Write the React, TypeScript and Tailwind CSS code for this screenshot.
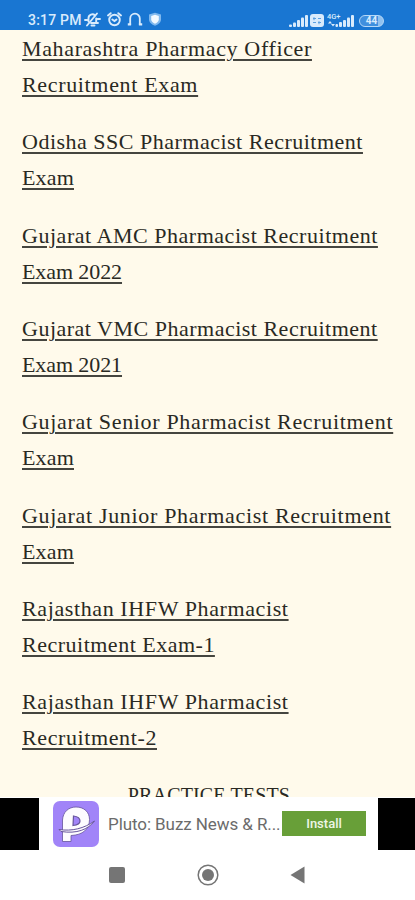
const exams = [
  [
    { text: 'Maharashtra Pharmacy Officer', tracking: 'tracking-[0.64px]' },
    { text: 'Recruitment Exam', tracking: 'tracking-[0.66px]' },
  ],
  [
    { text: 'Odisha SSC Pharmacist Recruitment', tracking: 'tracking-[0.5px]' },
    { text: 'Exam', tracking: 'tracking-[0.17px]' },
  ],
  [
    { text: 'Gujarat AMC Pharmacist Recruitment', tracking: 'tracking-[0.53px]' },
    { text: 'Exam 2022', tracking: 'tracking-[-0.09px]' },
  ],
  [
    { text: 'Gujarat VMC Pharmacist Recruitment', tracking: 'tracking-[0.5px]' },
    { text: 'Exam 2021', tracking: 'tracking-[-0.09px]' },
  ],
  [
    { text: 'Gujarat Senior Pharmacist Recruitment', tracking: 'tracking-[0.67px]' },
    { text: 'Exam', tracking: 'tracking-[0.17px]' },
  ],
  [
    { text: 'Gujarat Junior Pharmacist Recruitment', tracking: 'tracking-[0.68px]' },
    { text: 'Exam', tracking: 'tracking-[0.17px]' },
  ],
  [
    { text: 'Rajasthan IHFW Pharmacist', tracking: 'tracking-[0.61px]' },
    { text: 'Recruitment Exam-1', tracking: 'tracking-[0.5px]' },
  ],
  [
    { text: 'Rajasthan IHFW Pharmacist', tracking: 'tracking-[0.61px]' },
    { text: 'Recruitment-2', tracking: 'tracking-[0.61px]' },
  ],
];

function SignalBars() {
  return (
    <svg width="19" height="12" viewBox="0 0 19 12" fill="currentColor">
      <rect x="0" y="9.5" width="3" height="2.5" rx="1" />
      <rect x="4" y="7.5" width="3" height="4.5" rx="1" />
      <rect x="8" y="5" width="3" height="7" rx="1" />
      <rect x="12" y="2.5" width="3" height="9.5" rx="1" />
      <rect x="16" y="0" width="3" height="12" rx="1" />
    </svg>
  );
}

function StatusBar() {
  return (
    <header className="flex h-[30px] shrink-0 items-start bg-[#1976d2] pl-7 pr-[31px] pt-3 text-[#d9ebfc]">
      <span className="w-[55px] whitespace-nowrap pt-px font-['Roboto'] text-[14px] font-medium leading-[15px] tracking-[0.2px]">
        3:17 PM
      </span>
      {/* muted bell */}
      <svg className="h-[15px] w-[18px]" viewBox="0 0 18 15" fill="none" stroke="currentColor" strokeWidth="1.9" strokeLinecap="round">
        <path d="M5.500 9.500V6a3.800 3.800 0 0 1 6.500-2.500M13.200 6.500v3.500M8 11h7M8.500 13.500h3" />
        <path d="M4 13.500 14 1.500M2 8h2.500M14.500 7H17" />
      </svg>
      {/* alarm */}
      <svg className="ml-[6px] h-[15px] w-[15px]" viewBox="0 0 15 15" fill="none" stroke="currentColor" strokeWidth="1.9" strokeLinecap="round">
        <circle cx="7.5" cy="8" r="5.3" />
        <path d="M1 3.5 3.7 1.2M14 3.5l-2.7-2.3M5.3 7.5l2.2 1.6 2-1.6" />
      </svg>
      {/* headphones */}
      <svg className="ml-[5px] h-[15px] w-[16px]" viewBox="0 0 16 15" fill="none" stroke="currentColor" strokeWidth="1.8">
        <path d="M3.2 13V6.500a4.800 4.800 0 0 1 9.600 0V13" />
        <path d="M.8 12.300h3.300M11.900 12.300h3.300" strokeWidth="2.300" />
      </svg>
      {/* shield */}
      <svg className="ml-[5px] h-[14px] w-[14px]" viewBox="0 0 14 14">
        <path d="M7 .8 13 2.5v5c0 3-2.8 5-6 6.2-3.2-1.2-6-3.2-6-6.2v-5z" fill="#7fb8ee" />
        <path d="M7 2.8 10.800 4v3.500c0 2-1.800 3.300-3.800 4.200-2-.9-3.800-2.200-3.800-4.200V4z" fill="#f2f9ff" />
      </svg>
      <div className="ml-auto flex items-end pt-[1px]">
        <SignalBars />
        <svg className="ml-[2px] h-[13px] w-[14px]" viewBox="0 0 14 13">
          <rect x="0" y="0" width="14" height="13" rx="3" fill="#d9ebfc" />
          <path d="M3 4.5h3M8 4.5h3M3 8.5h3M8 8.5h3M4 3.2v3M9 7.2v3" stroke="#5b9fe0" strokeWidth="1" />
        </svg>
        <svg width="27" height="14" viewBox="0 0 27 14" fill="#d9ebfc" className="ml-[3px] shrink-0">
          <text x="0" y="5.5" fontFamily="Roboto" fontSize="7.5" fontWeight="500">4G+</text>
          <path d="M1 10.500l2-2.500 2 2.500zM4 11l2 2.500 2-2.500z" />
          <rect x="8.5" y="11" width="2.500" height="3" rx="1" />
          <rect x="12" y="9" width="3" height="5" rx="1" />
          <rect x="16" y="7" width="3" height="7" rx="1" />
          <rect x="20" y="4.5" width="3" height="9.5" rx="1" />
          <rect x="24" y="2" width="3" height="12" rx="1" />
        </svg>
        <span className="ml-[5px] flex h-[12px] w-[25px] items-center justify-center rounded-full border-[1.5px] border-[#b5d8f8] bg-linear-to-r from-[#3f8fde] from-80% to-[#8fc1f0] to-80% font-['Roboto'] text-[10px] font-bold leading-none">
          44
        </span>
      </div>
    </header>
  );
}

function PlutoLogo() {
  return (
    <svg width="46" height="46" viewBox="0 0 46 46" className="shrink-0">
      <rect width="46" height="46" rx="7" fill="#a184f8" />
      <path
        d="M9.500 27V19C10 11 15.500 6 23 6c8 0 13.500 5 13.500 12.500C36.500 28 30 34 18 34.500V40.500H9.500V34z"
        fill="#fdfcff"
        stroke="#66549c"
        strokeWidth="0.8"
      />
      <path d="M20.500 15c4 .5 6.500 2.500 6.500 5 0 2.500-2.500 4-7 4.500z" fill="#a184f8" stroke="#66549c" strokeWidth="1.2" />
      <path d="M6 28.500c13 2 25-1 35.500-8.500C35 28.500 24 33 8 30.500z" fill="#fdfcff" stroke="#66549c" strokeWidth="1" />
    </svg>
  );
}

function AdBanner() {
  return (
    <div className="flex h-[53px] shrink-0 bg-white">
      <div className="mt-px w-[39px] bg-black" />
      <div className="flex flex-1 items-center pl-[14px]">
        <PlutoLogo />
        <span className="ml-[9px] w-[174px] whitespace-nowrap pt-[2px] font-['Roboto'] text-[17px] tracking-[-0.08px] text-[#6b6b6b]">
          Pluto: Buzz News &amp; R...
        </span>
        <button className="h-[25px] w-[84px] bg-[#689f38] font-['Roboto'] text-[13px] font-medium leading-none text-[#eef6e6]">
          Install
        </button>
      </div>
      <div className="mt-px w-[37px] bg-black" />
    </div>
  );
}

function NavBar() {
  return (
    <nav className="flex h-[50px] shrink-0 items-center bg-white pl-[109px] text-[#757575]">
      <span className="size-4 rounded-[2px] bg-[#757575]" />
      <svg className="ml-[72px]" width="22" height="22" viewBox="0 0 22 22">
        <circle cx="11" cy="11" r="9.8" fill="none" stroke="currentColor" strokeWidth="1.5" />
        <circle cx="11" cy="11" r="6" fill="currentColor" />
      </svg>
      <svg className="ml-[71px]" width="15" height="18" viewBox="0 0 15 18" fill="currentColor">
        <path d="M14.5.5v17L.5 9z" />
      </svg>
    </nav>
  );
}

export default function App() {
  return (
    <div className="flex h-[900px] w-[415px] flex-col overflow-hidden bg-white">
      <StatusBar />
      <main className="h-[767px] shrink-0 overflow-hidden bg-[#fffaeb] font-['Liberation_Serif',serif] text-[#292923]">
        <ul className="flex flex-col gap-[21.35px] pl-[22px] pt-px text-[22px] leading-[36px]">
          {exams.map((lines, i) => (
            <li key={i}>
              <a className="underline decoration-[#45453f] decoration-[1.5px] underline-offset-[3px]">
                {lines.map((line) => (
                  <span key={line.text} className={`block whitespace-nowrap ${line.tracking}`}>
                    {line.text}
                  </span>
                ))}
              </a>
            </li>
          ))}
        </ul>
        <h2 className="mt-[21px] pl-[3px] text-center text-[20px] leading-[36px] tracking-[0.15px]">
          PRACTICE TESTS
        </h2>
      </main>
      <AdBanner />
      <NavBar />
    </div>
  );
}
